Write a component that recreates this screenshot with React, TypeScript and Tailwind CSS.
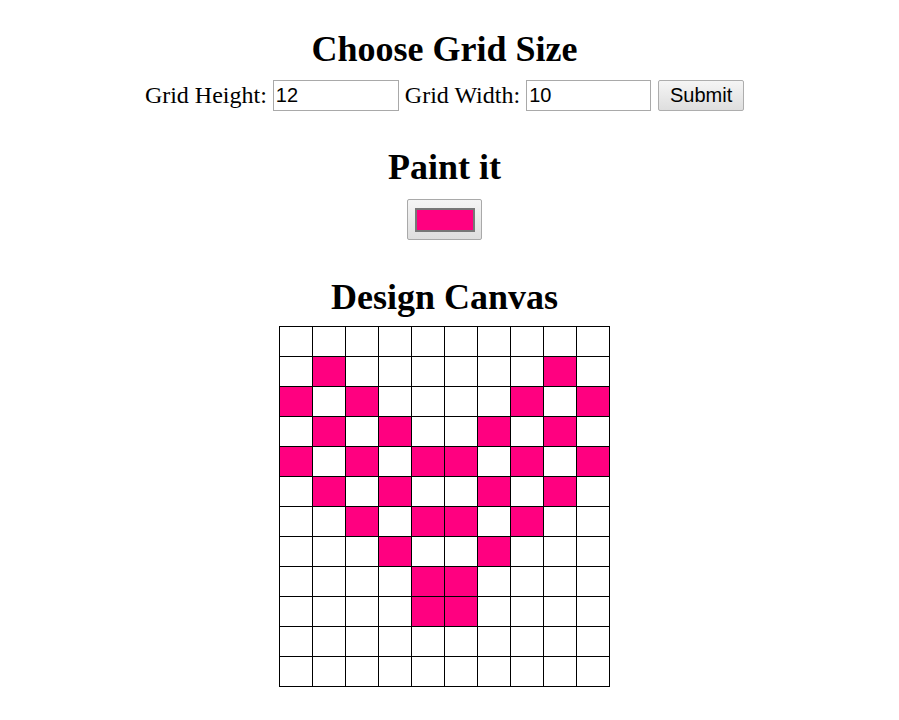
import { useState } from "react";

const ROWS = 12;
const COLS = 10;
const PINK = "#ff0080";

// heart pattern painted on the canvas
const painted: Record<number, number[]> = {
  1: [1, 8],
  2: [0, 2, 7, 9],
  3: [1, 3, 6, 8],
  4: [0, 2, 4, 5, 7, 9],
  5: [1, 3, 6, 8],
  6: [2, 4, 5, 7],
  7: [3, 6],
  8: [4, 5],
  9: [4, 5],
};

function buildGrid() {
  const grid: boolean[][] = [];
  for (let r = 0; r < ROWS; r++) {
    const row: boolean[] = [];
    for (let c = 0; c < COLS; c++) {
      row.push((painted[r] || []).includes(c));
    }
    grid.push(row);
  }
  return grid;
}

export default function App() {
  const [height, setHeight] = useState("12");
  const [width, setWidth] = useState("10");
  const [cells, setCells] = useState<boolean[][]>(buildGrid);

  const toggle = (r: number, c: number) => {
    setCells((prev) =>
      prev.map((row, ri) => row.map((v, ci) => (ri === r && ci === c ? !v : v)))
    );
  };

  return (
    <div className="w-[889px] bg-white text-black font-['Liberation_Serif','Times_New_Roman',serif] text-[24px]">
      <div className="flex flex-col items-center">
        <h1 className="mt-[29px] text-[36px] leading-[40px] font-bold">Choose Grid Size</h1>

        <form
          className="mt-[11px] flex items-center h-[31px]"
          onSubmit={(e) => e.preventDefault()}
        >
          <label htmlFor="grid-height" className="leading-[31px]">Grid Height:</label>
          <input
            id="grid-height"
            type="text"
            value={height}
            onChange={(e) => setHeight(e.target.value)}
            className="ml-[6px] w-[126px] h-[31px] border border-[#a9a9a9] px-[2px] font-['Liberation_Sans',Arial,sans-serif] text-[20px] outline-none"
          />
          <label htmlFor="grid-width" className="ml-[6px] leading-[31px]">Grid Width:</label>
          <input
            id="grid-width"
            type="text"
            value={width}
            onChange={(e) => setWidth(e.target.value)}
            className="ml-[6px] w-[125px] h-[31px] border border-[#a9a9a9] px-[2px] font-['Liberation_Sans',Arial,sans-serif] text-[20px] outline-none"
          />
          <button
            type="submit"
            className="ml-[7px] w-[86px] h-[31px] border border-[#adadad] rounded-[2px] bg-gradient-to-b from-[#f5f5f5] to-[#dedede] font-['Liberation_Sans',Arial,sans-serif] text-[20px] leading-[29px]"
          >
            Submit
          </button>
        </form>

        <h2 className="mt-[36px] text-[36px] leading-[40px] font-bold">Paint it</h2>

        <button
          type="button"
          className="mt-[12px] w-[75px] h-[41px] border border-[#a9a9a9] rounded-[2px] bg-gradient-to-b from-[#f5f5f5] to-[#dedede] flex items-center justify-center"
        >
          <span className="block w-[60px] h-[24px] border-2 border-[#777777]" style={{ backgroundColor: PINK }} />
        </button>

        <h2 className="mt-[37px] text-[36px] leading-[40px] font-bold">Design Canvas</h2>

        <div className="mt-[9px] grid grid-cols-[repeat(10,32px)] grid-rows-[repeat(12,29px)] gap-px p-px bg-black">
          {cells.map((row, r) =>
            row.map((on, c) => (
              <div
                key={`${r}-${c}`}
                onClick={() => toggle(r, c)}
                className={on ? "bg-[#ff0080]" : "bg-white"}
              />
            ))
          )}
        </div>
      </div>
    </div>
  );
}
